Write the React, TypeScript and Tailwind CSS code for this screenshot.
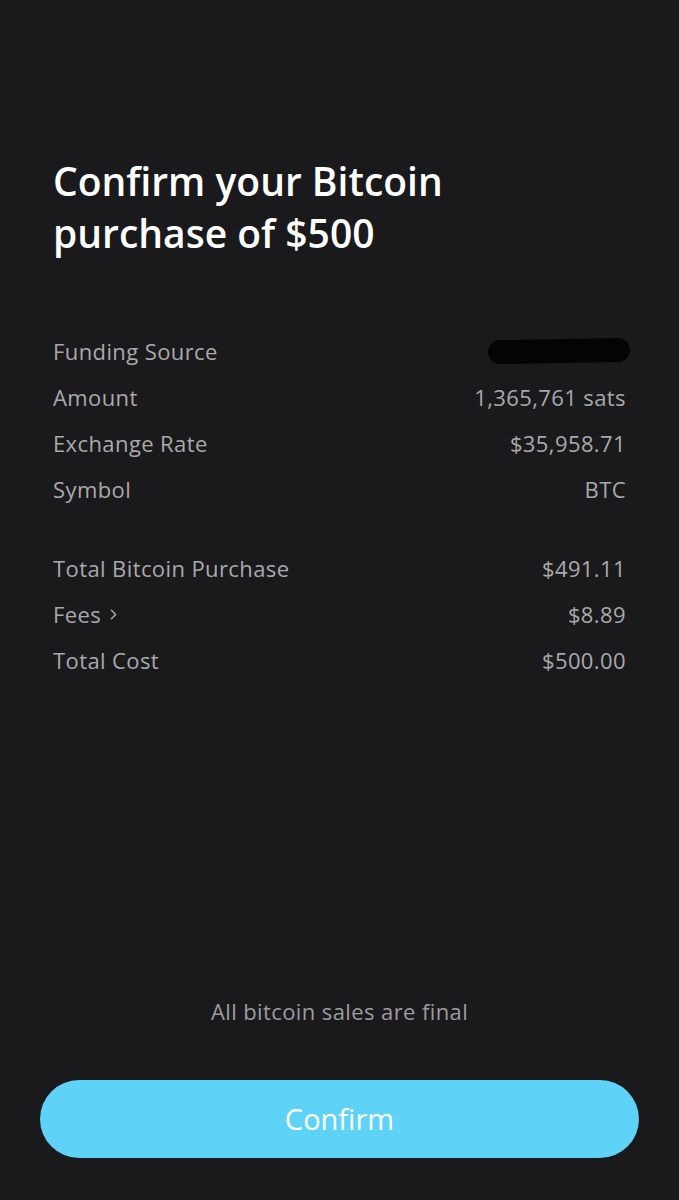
import { ChevronRight } from 'lucide-react';

interface Row {
  label: string;
  value?: string;
  chevron?: boolean;
  redacted?: boolean;
}

const details: Row[] = [
  { label: 'Funding Source', redacted: true },
  { label: 'Amount', value: '1,365,761 sats' },
  { label: 'Exchange Rate', value: '$35,958.71' },
  { label: 'Symbol', value: 'BTC' },
];

const totals: Row[] = [
  { label: 'Total Bitcoin Purchase', value: '$491.11' },
  { label: 'Fees', value: '$8.89', chevron: true },
  { label: 'Total Cost', value: '$500.00' },
];

function DetailRow({ row }: { row: Row }) {
  return (
    <div className="flex h-[46px] items-center justify-between text-[22px] tracking-[0.4px] text-[#a9a9ab]">
      <span className="flex items-center">
        {row.label}
        {row.chevron && <ChevronRight className="ml-[4px] h-[17px] w-[17px]" strokeWidth={2} />}
      </span>
      {row.redacted ? (
        <div className="mr-[-4px] h-[24px] w-[142px] -rotate-1 rounded-full bg-[#050405]" />
      ) : (
        <span>{row.value}</span>
      )}
    </div>
  );
}

export default function App() {
  return (
    <div
      className="flex min-h-[1200px] w-full flex-col bg-[#1a1a1c] px-[53px]"
      style={{ fontFamily: '"Open Sans", "Liberation Sans", sans-serif' }}
    >
      <h1 className="mt-[155px] text-[39px] font-semibold leading-[52px] text-white">
        Confirm your Bitcoin
        <br />
        purchase of $500
      </h1>

      <div className="mt-[69px]">
        {details.map((r) => (
          <DetailRow key={r.label} row={r} />
        ))}
      </div>

      <div className="mt-[33px]">
        {totals.map((r) => (
          <DetailRow key={r.label} row={r} />
        ))}
      </div>

      <div className="flex-1" />

      <p className="text-center text-[22px] tracking-[0.4px] text-[#9c9c9e]">All bitcoin sales are final</p>

      <button className="mx-[-13px] mb-[42px] mt-[52px] flex h-[78px] items-center justify-center rounded-full bg-[#5fd3f7] text-[29px] text-white">
        Confirm
      </button>
    </div>
  );
}
